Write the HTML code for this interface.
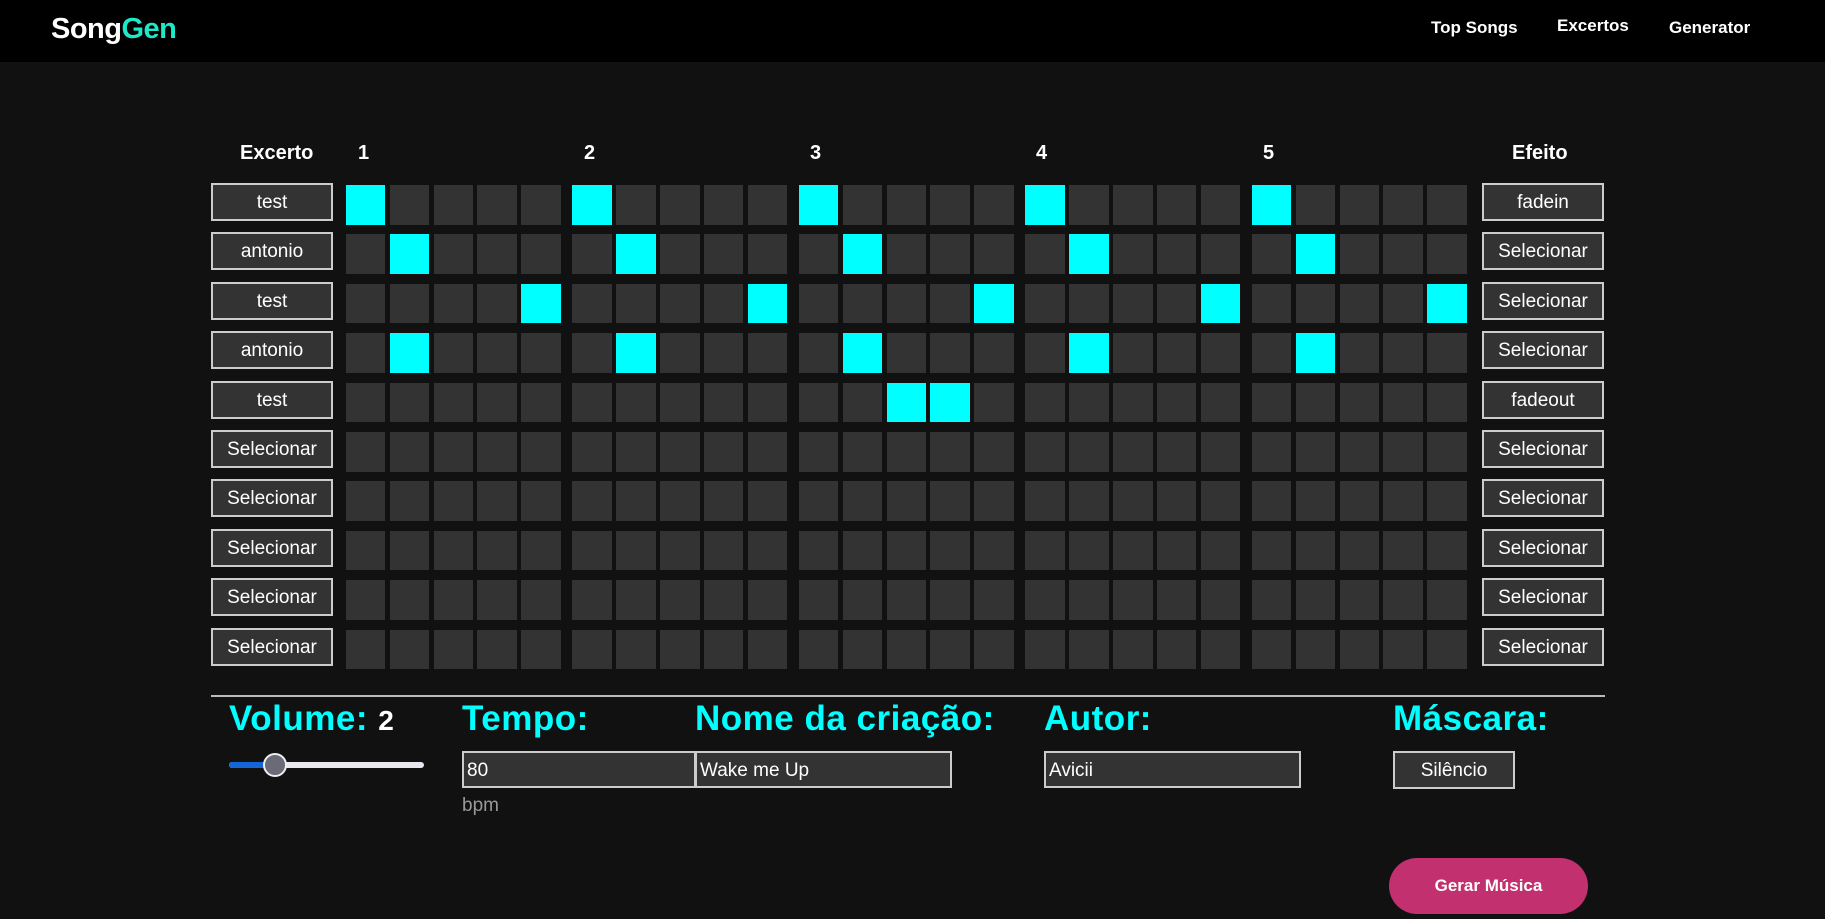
<!DOCTYPE html>
<html><head><meta charset="utf-8"><style>
*{box-sizing:border-box;margin:0;padding:0}
body{width:1825px;height:919px;background:#111;font-family:"Liberation Sans",sans-serif;position:relative;overflow:hidden;color:#fff}
.nav{position:absolute;left:0;top:0;width:1825px;height:62px;background:#000}
.logo{position:absolute;left:51px;top:13px;font-size:29px;font-weight:bold;letter-spacing:-0.5px}
.logo span{color:#1de9c8}
.nl{position:absolute;font-size:17px;font-weight:bold;top:18px}
.h{position:absolute;font-weight:bold;font-size:20px;top:142px}
.btn{position:absolute;width:122px;height:38px;background:#333;border:2px solid #ccc;color:#fff;font-size:19px;text-align:center;line-height:36px}
.c{position:absolute;width:39.5px;height:39.5px;background:#333}
.c.on{background:#0ff}
.lab{position:absolute;top:699px;font-size:35px;font-weight:bold;color:#0ff;letter-spacing:0.5px}
.inp{position:absolute;top:751px;height:37px;background:#333;border:2px solid #ccc;font-size:19px;line-height:35px;padding-left:3px}
</style></head><body>
<div class="nav"><div class="logo">Song<span>Gen</span></div>
<div class="nl" style="left:1431px">Top Songs</div>
<div class="nl" style="left:1557px;top:16px">Excertos</div>
<div class="nl" style="left:1669px">Generator</div></div>
<div class="h" style="left:240px">Excerto</div>
<div class="h" style="left:358px">1</div>
<div class="h" style="left:584px">2</div>
<div class="h" style="left:810px">3</div>
<div class="h" style="left:1036px">4</div>
<div class="h" style="left:1263px">5</div>
<div class="h" style="left:1512px">Efeito</div>
<div id="g"></div>
<div style="position:absolute;left:211px;top:695px;width:1394px;height:2px;background:#bbb"></div>
<div class="lab" style="left:229px">Volume: <span style="color:#fff;font-size:28px">2</span></div>
<div class="lab" style="left:462px">Tempo:</div>
<div class="lab" style="left:695px">Nome da criação:</div>
<div class="lab" style="left:1044px">Autor:</div>
<div class="lab" style="left:1393px">Máscara:</div>
<div style="position:absolute;left:229px;top:762px;width:195px;height:6px;border-radius:3px;background:#e8e8ee"></div>
<div style="position:absolute;left:229px;top:762px;width:46px;height:6px;border-radius:3px;background:#1565d8"></div>
<div style="position:absolute;left:263px;top:753px;width:24px;height:24px;border-radius:50%;background:#6b6b78;border:2px solid #eee"></div>
<div class="inp" style="left:462px;width:234px">80</div>
<div class="inp" style="left:695px;width:257px">Wake me Up</div>
<div class="inp" style="left:1044px;width:257px">Avicii</div>
<div class="btn" style="left:1393px;top:751px;height:38px">Silêncio</div>
<div style="position:absolute;left:462px;top:795px;color:#999;font-size:19px">bpm</div>
<div style="position:absolute;left:1389px;top:858px;width:199px;height:56px;border-radius:28px;background:#c2306f;font-weight:bold;font-size:17px;text-align:center;line-height:56px">Gerar Música</div>
<script>
var rows=[["test","fadein",[0,5,10,15,20]],["antonio","Selecionar",[1,6,11,16,21]],["test","Selecionar",[4,9,14,19,24]],["antonio","Selecionar",[1,6,11,16,21]],["test","fadeout",[12,13]]];
for(var i=5;i<10;i++)rows.push(["Selecionar","Selecionar",[]]);
var h="";
rows.forEach(function(r,i){var y=183+i*49.4;
h+='<div class="btn" style="left:211px;top:'+y+'px">'+r[0]+'</div>';
h+='<div class="btn" style="left:1482px;top:'+y+'px">'+r[1]+'</div>';
for(var c=0;c<25;c++){var x=345.7+Math.floor(c/5)*226.5+(c%5)*43.9;
h+='<div class="c'+(r[2].indexOf(c)>=0?' on':'')+'" style="left:'+x+'px;top:'+(y+2)+'px"></div>';}
});
document.getElementById("g").innerHTML=h;
</script>
</body></html>
